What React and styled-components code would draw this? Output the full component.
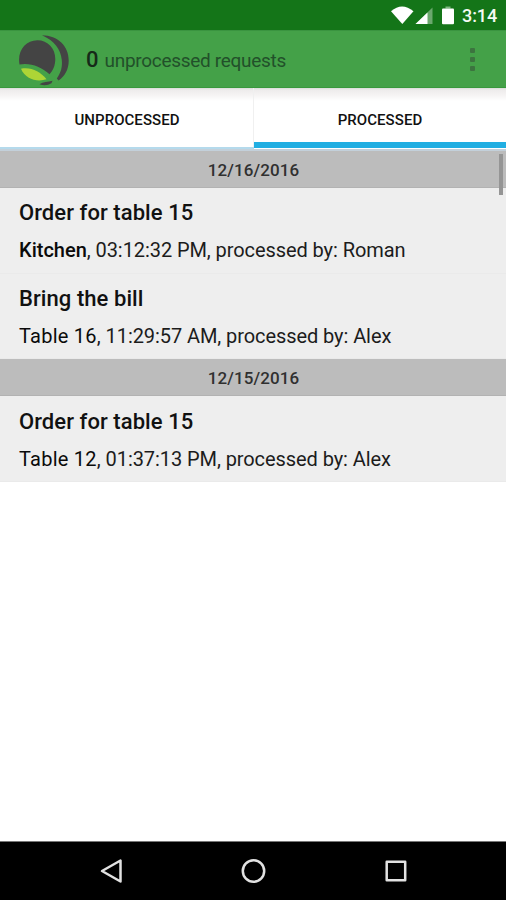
import React from 'react';
import styled, { createGlobalStyle } from 'styled-components';

const GlobalStyle = createGlobalStyle`
  * { box-sizing: border-box; }
  body { margin: 0; background: #fff; font-family: Roboto, sans-serif; }
`;

const Screen = styled.div`
  width: 506px;
  height: 900px;
  display: flex;
  flex-direction: column;
  overflow: hidden;
  background: #fff;
`;

const StatusBar = styled.header`
  height: 30px;
  flex: none;
  display: flex;
  justify-content: flex-end;
  align-items: center;
  padding: 2px 9px 0 0;
  background: #147518;
  color: #f4fbf4;
`;

const StatusIcons = styled.svg`
  width: 66px;
  height: 20px;
  margin-right: 6px;
`;

const Clock = styled.span`
  width: 35px;
  font-size: 18px;
  font-weight: 500;
  line-height: 20px;
  letter-spacing: -0.1px;
  white-space: nowrap;
`;

const AppBar = styled.div`
  height: 58px;
  flex: none;
  display: flex;
  align-items: center;
  padding: 1px 26px 0 18px;
  background: #44a148;
  border-top: 1px solid #3a9440;
  border-bottom: 1px solid #38983c;
`;

const Logo = styled.svg`
  width: 52px;
  height: 52px;
  margin-right: 16px;
`;

const Title = styled.h1`
  flex: 1;
  margin: 0;
  padding-top: 2px;
  display: flex;
  align-items: baseline;
  gap: 6px;
  font-size: 19px;
  font-weight: 400;
  line-height: 28px;
  letter-spacing: -0.3px;
  color: #22502a;
`;

const Count = styled.strong`
  font-size: 22px;
  font-weight: 500;
  letter-spacing: 0;
  color: #162a18;
`;

const MenuButton = styled.button`
  width: 16px;
  height: 28px;
  padding: 0;
  border: 0;
  background: none;
  display: flex;
  flex-direction: column;
  align-items: center;
  justify-content: center;
  gap: 4px;
`;

const Dot = styled.span`
  width: 5px;
  height: 5px;
  border-radius: 1px;
  background: #3c743f;
`;

const Tabs = styled.nav`
  height: 63px;
  flex: none;
  display: grid;
  grid-template-columns: 254px 252px;
  background: linear-gradient(#d9dcd9 0, #eeecec 2px, #f5f3f3 7px, #fff 13px);
  border-bottom: 2px solid #c3d0da;
`;

const Tab = styled.button`
  border: 0;
  padding: 9px 0 0;
  background: none;
  font: 500 15px/20px Roboto, sans-serif;
  letter-spacing: 0.05px;
  color: #111;
  margin-bottom: ${({ $active }) => ($active ? '1px' : '0')};
  border-bottom: ${({ $active }) => ($active ? '6px solid #21aee2' : '2px solid #b5daec')};
  padding-bottom: ${({ $active }) => ($active ? '0' : '5px')};
  box-shadow: ${({ $active }) => ($active ? 'none' : 'inset -1px 0 #f0f0f0')};
`;

const List = styled.main`
  flex: 1;
  position: relative;
`;

const DateHeader = styled.h2`
  height: 37px;
  margin: 0;
  display: flex;
  align-items: center;
  justify-content: center;
  padding-left: 1px;
  padding-top: 2px;
  background: #bcbcbc;
  border-bottom: 1px solid #b2b2b2;
  font-size: 17px;
  font-weight: 500;
  letter-spacing: 0.08px;
  color: #303030;
`;

const Request = styled.article`
  height: ${({ $height }) => $height}px;
  padding: ${({ $offset }) => $offset}px 18px 0 19px;
  background: #eee;
  border-bottom: 1px solid #eaeaea;
`;

const RequestTitle = styled.h3`
  margin: 0 0 11px;
  font-size: 22px;
  font-weight: 500;
  line-height: 27px;
  letter-spacing: 0.07px;
  color: #111;
`;

const Details = styled.p`
  margin: 0;
  font-size: 20px;
  line-height: 26px;
  letter-spacing: -0.08px;
  white-space: nowrap;
  color: #1c1c1c;
`;

const Place = styled.span`
  font-weight: ${({ $strong }) => ($strong ? 500 : 400)};
  letter-spacing: ${({ $strong }) => ($strong ? '0' : '0.25px')};
  color: #0a0a0a;
`;

const ScrollThumb = styled.div`
  position: absolute;
  top: 3px;
  right: 3px;
  width: 4px;
  height: 41px;
  background: #959595;
`;

const NavBar = styled.footer`
  height: 59px;
  flex: none;
  display: flex;
  justify-content: space-between;
  align-items: center;
  padding: 0 96px 0 98px;
  background: #000;
  border-top: 1px solid #777;
`;

const NavButton = styled.button`
  width: 28px;
  height: 28px;
  padding: 0;
  border: 0;
  background: none;
`;

const NavIcon = styled.svg`
  display: block;
  fill: none;
  stroke: #e2e2e2;
  stroke-width: 2.5;
  stroke-linejoin: round;
`;

const groups = [
  {
    date: '12/16/2016',
    requests: [
      { title: 'Order for table 15', place: 'Kitchen', strong: true, time: '03:12:32 PM', by: 'Roman', height: 86, offset: 11 },
      { title: 'Bring the bill', place: 'Table 16', time: '11:29:57 AM', by: 'Alex', height: 85, offset: 11 },
    ],
  },
  {
    date: '12/15/2016',
    requests: [
      { title: 'Order for table 15', place: 'Table 12', time: '01:37:13 PM', by: 'Alex', height: 86, offset: 12 },
    ],
  },
];

export default function App() {
  return (
    <Screen>
      <GlobalStyle />
      <StatusBar>
        <StatusIcons viewBox="390 6 66 20">
          <path d="M391 11.200Q402 1.800 413.500 11.200L402.300 24Z" fill="#fff" />
          <path d="M432.500 7.500V24H415.500Z" fill="#6ba86d" />
          <path d="M427.500 12.400V24H415.500Z" fill="#fff" />
          <path d="M445.500 6.500h5v2h-5Z" fill="#7fb681" />
          <rect x="442" y="8.500" width="12" height="15.700" rx="1" fill="#fff" />
        </StatusIcons>
        <Clock>3:14</Clock>
      </StatusBar>
      <AppBar>
        <Logo viewBox="18 33 52 52">
          <path d="M42 34.200C58 34.500 68.700 45 68.700 59.500C68.700 69 64.500 75.500 58.500 79.500L56.800 77.500C61 71.500 62.500 66 61.800 59C60.800 48 54 39.500 42 34.200Z" fill="#444" />
          <path d="M19.500 63.500C17 50 25.500 39.300 37.300 39.300C48 39.300 55.300 47.500 55.300 58C55.300 64.500 53 69.500 49.500 73.200C41 65.500 30 61.500 19.500 63.500Z" fill="#444" />
          <path d="M21 67.800C31 65.800 40 70.500 46.500 78.300C37 81.500 25 78 21 67.800Z" fill="#add536" />
          <path d="M39.500 83.200C43 81 48 80.800 52.500 79.800L51.500 82.300C48 84.400 43.500 84.800 39.500 83.200Z" fill="#444" />
        </Logo>
        <Title><Count>0</Count>unprocessed requests</Title>
        <MenuButton aria-label="More options"><Dot /><Dot /><Dot /></MenuButton>
      </AppBar>
      <Tabs>
        <Tab>UNPROCESSED</Tab>
        <Tab $active>PROCESSED</Tab>
      </Tabs>
      <List>
        <ScrollThumb />
        {groups.map((group) => (
          <section key={group.date}>
            <DateHeader>{group.date}</DateHeader>
            {group.requests.map((r) => (
              <Request key={r.time} $height={r.height} $offset={r.offset}>
                <RequestTitle>{r.title}</RequestTitle>
                <Details>
                  <Place $strong={r.strong}>{r.place}</Place>, {r.time}, processed by: {r.by}
                </Details>
              </Request>
            ))}
          </section>
        ))}
      </List>
      <NavBar>
        <NavButton aria-label="Back">
          <NavIcon viewBox="0 0 28 28"><path d="M4 14L22.500 3.500V24.500Z" /></NavIcon>
        </NavButton>
        <NavButton aria-label="Home">
          <NavIcon viewBox="0 0 28 28"><circle cx="13.500" cy="14" r="10.700" /></NavIcon>
        </NavButton>
        <NavButton aria-label="Recent apps">
          <NavIcon viewBox="0 0 28 28"><rect x="4.700" y="4.700" width="18.500" height="18.500" /></NavIcon>
        </NavButton>
      </NavBar>
    </Screen>
  );
}
